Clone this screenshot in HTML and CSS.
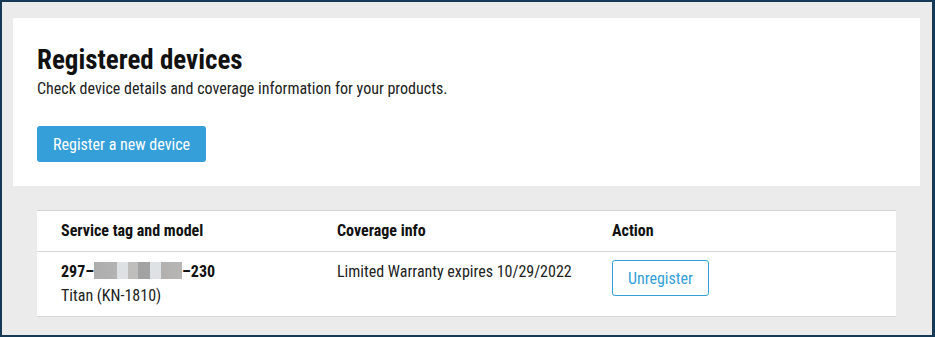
FILE: index.html
```html
<!DOCTYPE html>
<html>
  <head>
    <meta charset="UTF-8" />
    <meta name="viewport" content="width=device-width, initial-scale=1.0" />
    <title>Registered devices</title>
    <link rel="stylesheet" href="styles.css">
  </head>

  <body>
    <div class="page">
      <div class="intro">
        <h1 class="title">Registered devices</h1>
        <p class="subtitle">Check device details and coverage information for your products.</p>
        <button class="primary-button">Register a new device</button>
      </div>

      <div class="devices">
        <table class="devices-table">
          <colgroup>
            <col class="col-tag" />
            <col class="col-coverage" />
            <col />
          </colgroup>
          <thead>
            <tr>
              <th>Service tag and model</th>
              <th>Coverage info</th>
              <th>Action</th>
            </tr>
          </thead>
          <tbody>
            <tr>
              <td>
                <div class="service-tag">297–<span class="masked" aria-label="hidden"></span>–230</div>
                <div>Titan (KN-1810)</div>
              </td>
              <td>Limited Warranty expires 10/29/2022</td>
              <td><button class="outline-button">Unregister</button></td>
            </tr>
          </tbody>
        </table>
      </div>
    </div>
  </body>
</html>
```

FILE: styles.css
```css
html, body {
  margin: 0;
  padding: 0;
  height: 100%;
}

body {
  font-family: "Roboto Condensed", Roboto, sans-serif;
  color: #222;
  background-color: #ebebeb;
  border-style: solid;
  border-color: #163a55;
  border-width: 2px 3px 2px 2px;
  box-sizing: border-box;
}

.page {
  padding: 16px 12px 0 11px;
}

.intro {
  background-color: #fff;
  padding: 25px 24px 24px;
}

.title {
  margin: 0;
  font-size: 27px;
  line-height: 34px;
  font-weight: bold;
  color: #111;
}

.subtitle {
  margin: 0 0 25px;
  font-size: 16px;
  line-height: 24px;
}

button {
  font-family: inherit;
  font-size: 16px;
  cursor: pointer;
  border-radius: 3px;
}

.primary-button {
  height: 36px;
  padding: 0 16px;
  border: none;
  background-color: #349fd9;
  color: #fff;
}

.outline-button {
  height: 36px;
  padding: 0 15px;
  border: 1px solid #349fd9;
  background-color: #fff;
  color: #349fd9;
}

.devices {
  padding: 24px 24px 0;
}

.devices-table {
  width: 100%;
  table-layout: fixed;
  border-collapse: collapse;
  background-color: #fff;
  font-size: 16px;
  line-height: 24px;
}

.col-tag {
  width: 276px;
}

.col-coverage {
  width: 275px;
}

.devices-table th,
.devices-table td {
  padding: 8px 8px 8px 24px;
  text-align: left;
  vertical-align: top;
  border-top: 1px solid #d6d6d6;
  border-bottom: 1px solid #d6d6d6;
}

.devices-table th {
  font-weight: bold;
  color: #111;
}

.service-tag {
  font-weight: bold;
  color: #111;
}

/* blurred part of the service tag */
.masked {
  display: inline-block;
  width: 88px;
  height: 17px;
  vertical-align: -2px;
  background: linear-gradient(to right,
    #adadad 0, #b3b3b3 23px,
    #dde1e4 23px, #dde1e4 34px,
    #c0bebc 34px, #c0bebc 44px,
    #a3a2a2 44px, #a3a2a2 56px,
    #dfe2e5 56px, #dfe2e5 67px,
    #b3b1b0 67px, #b8b6b5 88px);
}
```
